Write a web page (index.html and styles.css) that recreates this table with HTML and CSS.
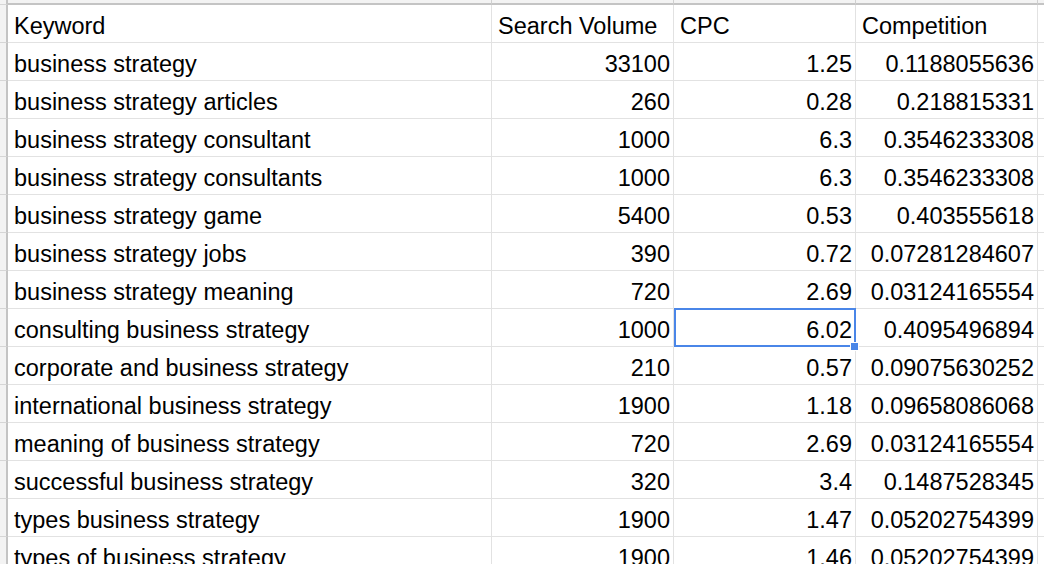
FILE: index.html
```html
<!DOCTYPE html>
<html>
<head>
<meta charset="utf-8">
<link rel="stylesheet" href="styles.css">
</head>
<body>
<div class="sheet">
  <div class="hd gut"></div><div class="hd"></div><div class="hd"></div><div class="hd"></div><div class="hd"></div><div class="hd last"></div>

  <div class="gut"></div><div class="c">Keyword</div><div class="c">Search Volume</div><div class="c">CPC</div><div class="c">Competition</div><div class="c last"></div>

  <div class="gut"></div><div class="c">business strategy</div><div class="c n">33100</div><div class="c n">1.25</div><div class="c n">0.1188055636</div><div class="c last"></div>
  <div class="gut"></div><div class="c">business strategy articles</div><div class="c n">260</div><div class="c n">0.28</div><div class="c n">0.218815331</div><div class="c last"></div>
  <div class="gut"></div><div class="c">business strategy consultant</div><div class="c n">1000</div><div class="c n">6.3</div><div class="c n">0.3546233308</div><div class="c last"></div>
  <div class="gut"></div><div class="c">business strategy consultants</div><div class="c n">1000</div><div class="c n">6.3</div><div class="c n">0.3546233308</div><div class="c last"></div>
  <div class="gut"></div><div class="c">business strategy game</div><div class="c n">5400</div><div class="c n">0.53</div><div class="c n">0.403555618</div><div class="c last"></div>
  <div class="gut"></div><div class="c">business strategy jobs</div><div class="c n">390</div><div class="c n">0.72</div><div class="c n">0.07281284607</div><div class="c last"></div>
  <div class="gut"></div><div class="c">business strategy meaning</div><div class="c n">720</div><div class="c n">2.69</div><div class="c n">0.03124165554</div><div class="c last"></div>
  <div class="gut"></div><div class="c">consulting business strategy</div><div class="c n">1000</div><div class="c n sel">6.02<span class="handle"></span></div><div class="c n">0.4095496894</div><div class="c last"></div>
  <div class="gut"></div><div class="c">corporate and business strategy</div><div class="c n">210</div><div class="c n">0.57</div><div class="c n">0.09075630252</div><div class="c last"></div>
  <div class="gut"></div><div class="c">international business strategy</div><div class="c n">1900</div><div class="c n">1.18</div><div class="c n">0.09658086068</div><div class="c last"></div>
  <div class="gut"></div><div class="c">meaning of business strategy</div><div class="c n">720</div><div class="c n">2.69</div><div class="c n">0.03124165554</div><div class="c last"></div>
  <div class="gut"></div><div class="c">successful business strategy</div><div class="c n">320</div><div class="c n">3.4</div><div class="c n">0.1487528345</div><div class="c last"></div>
  <div class="gut"></div><div class="c">types business strategy</div><div class="c n">1900</div><div class="c n">1.47</div><div class="c n">0.05202754399</div><div class="c last"></div>
  <div class="gut"></div><div class="c">types of business strategy</div><div class="c n">1900</div><div class="c n">1.46</div><div class="c n">0.05202754399</div><div class="c last"></div>
</div>
</body>
</html>
```
FILE: styles.css
```css
html, body {
  margin: 0;
  padding: 0;
  background: #ffffff;
  overflow: hidden;
}
.sheet {
  display: grid;
  grid-template-columns: 8px 484px 182px 182px 182px 1fr;
  grid-auto-rows: 38px;
  grid-template-rows: 5px;
  font-family: "Liberation Sans", Arial, sans-serif;
  font-size: 23.5px;
  color: #000000;
  width: 1044px;
}
.hd {
  box-sizing: border-box;
  background: #f3f3f3;
  border-bottom: 2px solid #c4c4c4;
  border-right: 1px solid #d0d0d0;
}
.gut {
  box-sizing: border-box;
  background: #f3f3f3;
  border-right: 2px solid #c4c4c4;
  border-bottom: 1px solid #d6d6d6;
}
.hd.gut {
  border-right: 2px solid #c4c4c4;
}
.c {
  box-sizing: border-box;
  position: relative;
  border-right: 1px solid #e2e2e2;
  border-bottom: 1px solid #e2e2e2;
  padding: 5px 3px 0 6px;
  line-height: 32px;
  white-space: nowrap;
  overflow: visible;
}
.n {
  text-align: right;
}
.last {
  border-right: none;
}
.sel::after {
  content: "";
  position: absolute;
  top: -1px;
  left: 0;
  right: -1px;
  bottom: -1px;
  border: 2px solid #4a86e8;
  pointer-events: none;
}
.handle {
  position: absolute;
  right: -4px;
  bottom: -5px;
  width: 7px;
  height: 7px;
  background: #4a86e8;
  border: 1px solid #ffffff;
  z-index: 2;
}
```
